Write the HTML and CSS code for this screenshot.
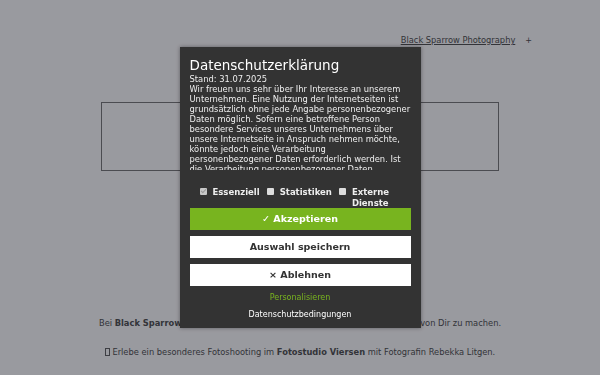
FILE: index.html
```html
<!DOCTYPE html>
<html lang="de">
<head>
    <meta charset="UTF-8">
    <meta name="viewport" content="width=device-width, initial-scale=1.0">
    <title>Black Sparrow Photography</title>
    <link rel="stylesheet" href="styles.css">
</head>
<body>

<header class="site-header">
    <nav class="site-nav">
        <a href="#">Black Sparrow Photography</a>
        <span class="nav-plus">+</span>
    </nav>
</header>

<section class="hero">
    <div class="hero-box"></div>
</section>

<section class="intro">
    <p>Bei <strong>Black Sparrow Photography</strong> hast Du die Möglichkeit, ganz tolle Bilder von Dir zu machen.</p>
    <p><span class="tofu"></span> Erlebe ein besonderes Fotoshooting im <strong>Fotostudio Viersen</strong> mit Fotografin Rebekka Litgen.</p>
</section>

<!-- Cookie consent -->
<div class="consent-overlay">
    <div class="consent-box">
        <div class="consent-text">
            <h2>Datenschutzerklärung</h2>
            <p>Stand: 31.07.2025<br>
            Wir freuen uns sehr über Ihr Interesse an unserem Unternehmen. Eine Nutzung der Internetseiten ist grundsätzlich ohne jede Angabe personenbezogener Daten möglich. Sofern eine betroffene Person besondere Services unseres Unternehmens über unsere Internetseite in Anspruch nehmen möchte, könnte jedoch eine Verarbeitung personenbezogener Daten erforderlich werden. Ist die Verarbeitung personenbezogener Daten erforderlich und besteht für eine solche Verarbeitung keine gesetzliche Grundlage, holen wir generell eine Einwilligung der betroffenen Person ein.</p>
        </div>

        <div class="consent-options">
            <label class="option"><input type="checkbox" checked disabled><span>Essenziell</span></label>
            <label class="option"><input type="checkbox"><span>Statistiken</span></label>
            <label class="option"><input type="checkbox"><span>Externe Dienste</span></label>
        </div>

        <div class="consent-buttons">
            <a href="#" class="btn btn-accept">&#10003; Akzeptieren</a>
            <a href="#" class="btn">Auswahl speichern</a>
            <a href="#" class="btn">&times; Ablehnen</a>
        </div>

        <a href="#" class="consent-link personalize">Personalisieren</a>
        <a href="#" class="consent-link">Datenschutzbedingungen</a>
    </div>
</div>

</body>
</html>
```

FILE: styles.css
```css
html, body {
    margin: 0;
    padding: 0;
}

body {
    font-family: 'DejaVu Sans', sans-serif;
    background: #fff;
    color: #555;
    font-size: 9px;
    min-height: 375px;
}

.site-header {
    padding: 35px 0 0;
}

.site-nav {
    display: flex;
    justify-content: flex-end;
    align-items: center;
    gap: 10px;
    padding-right: 68px;
}

.site-nav a {
    color: #555;
    font-size: 8.3px;
}

.nav-plus {
    font-size: 8px;
}

.hero {
    padding: 57px 101px 0;
}

.hero-box {
    height: 67px;
    border: 1px solid #7d7d7d;
}

.intro {
    text-align: center;
    padding-top: 147px;
}

.intro p {
    margin: 0 0 19px;
    font-size: 8.3px;
}

.tofu {
    display: inline-block;
    width: 3px;
    height: 6px;
    border: 1px solid #666;
    vertical-align: -1px;
}

/* overlay + dialog */
.consent-overlay {
    position: fixed;
    inset: 0;
    background: rgba(0, 3, 16, 0.4);
    display: flex;
    justify-content: center;
    align-items: center;
}

.consent-box {
    width: 221px;
    height: 261px;
    padding: 10px;
    background: #333;
    color: #eee;
    box-shadow: 0 0 4px rgba(0, 0, 0, 0.4);
    display: flex;
    flex-direction: column;
}

.consent-box > * {
    flex-shrink: 0;
}

.consent-text {
    height: 113px;
    overflow: hidden;
}

.consent-text h2 {
    margin: 0;
    font-size: 13.5px;
    font-weight: normal;
    line-height: 17px;
    color: #fff;
}

.consent-text p {
    margin: 0;
    font-size: 8.35px;
    line-height: 10px;
}

.consent-options {
    display: flex;
    justify-content: center;
    gap: 7px;
    padding: 17px 20px 0 10px;
    font-size: 8.5px;
    font-weight: bold;
    line-height: 10.5px;
}

.option {
    display: flex;
    align-items: flex-start;
    gap: 6px;
}

.option input {
    appearance: none;
    flex-shrink: 0;
    width: 7px;
    height: 7px;
    margin: 1px 0 0;
    background: #ddd;
    border-radius: 1px;
}

.option input:checked {
    background: #c8c8c8;
    position: relative;
}

.option input:checked::after {
    content: "";
    position: absolute;
    left: 2px;
    top: 0;
    width: 2px;
    height: 4px;
    border: solid #999;
    border-width: 0 1px 1px 0;
    transform: rotate(45deg);
}

.consent-buttons {
    display: flex;
    flex-direction: column;
    gap: 6px;
}

.btn {
    display: block;
    height: 22px;
    line-height: 22px;
    text-align: center;
    background: #fff;
    color: #333;
    text-decoration: none;
    font-weight: bold;
    font-size: 9.5px;
}

.btn-accept {
    background: #78b41f;
    color: #fff;
}

.consent-link {
    display: block;
    text-align: center;
    color: #fff;
    text-decoration: none;
    font-size: 8px;
    line-height: 17px;
}

.personalize {
    margin-top: 3px;
    color: #78b41f;
}
```
